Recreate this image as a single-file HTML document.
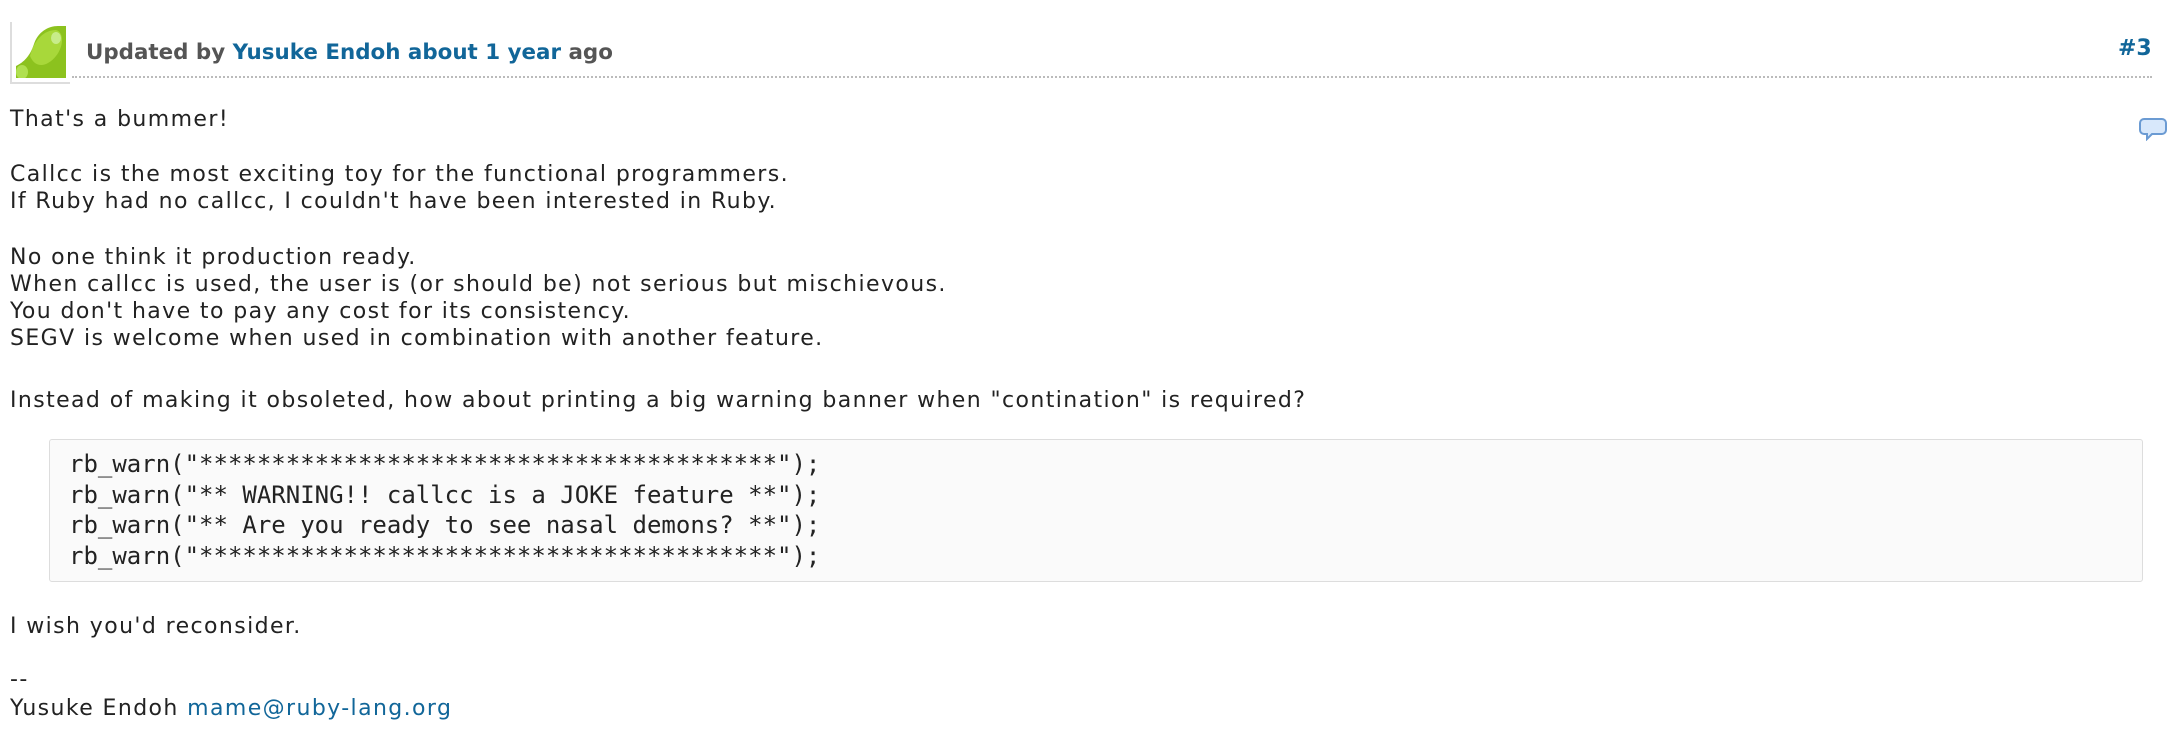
<!DOCTYPE html>
<html><head><meta charset="utf-8"><style>
body{margin:0;background:#fff;width:2178px;height:748px;overflow:hidden;font-family:"DejaVu Sans","Liberation Sans",sans-serif;color:#222;}
.av{position:absolute;left:10px;top:22px;width:58px;height:60px;border:2px solid #ddd;border-right:none;border-top:none;background:#fff}
.av svg{position:absolute;left:4px;top:4px}
.hdr{position:absolute;left:86px;top:40px;font-size:21.4px;font-weight:bold;color:#555;}
a{color:#169;text-decoration:none}
.line{position:absolute;left:72px;top:76px;width:2080px;border-top:2px dotted #bbb}
.num{position:absolute;left:2118px;top:36px;font-size:22px;font-weight:bold;color:#169}
.t{position:absolute;left:10px;font-size:22px;letter-spacing:1.4px;line-height:27px;white-space:nowrap}
pre{position:absolute;left:49px;top:439px;width:2094px;height:143px;margin:0;background:#fafafa;border:1px solid #ddd;border-radius:3px;box-sizing:border-box;padding:9px 0 0 19px;font-family:"DejaVu Sans Mono","Liberation Mono",monospace;font-size:24px;line-height:30.5px;color:#222}
</style></head><body>
<div class="av"><svg width="50" height="52" viewBox="0 0 50 52"><rect width="50" height="52" fill="#fff"/><path d="M0 52V40C8 36 14 30 18 18C22 6 32 0 42 0H50V52Z" fill="#8cc21e"/><path d="M14 30C18 14 28 4 40 4C48 6 48 20 40 30C32 40 20 44 14 30Z" fill="#a8d83a"/><ellipse cx="40" cy="12" rx="5" ry="6" fill="#c8ec8a"/><ellipse cx="6" cy="46" rx="6" ry="7" fill="#b0e050"/></svg></div>
<div class="hdr">Updated by <a>Yusuke Endoh</a> <a>about 1 year</a> ago</div>
<div class="num">#3</div>
<div class="line"></div>
<svg style="position:absolute;left:2139px;top:117px" width="28" height="24" viewBox="0 0 28 24"><path d="M5 2h18a4 4 0 0 1 4 4v7a4 4 0 0 1-4 4H13l-5 5v-5H5a4 4 0 0 1-4-4V6a4 4 0 0 1 4-4z" fill="#d8e8fb" stroke="#6b9bd3" stroke-width="2"/></svg>
<div class="t" style="top:106px">That's a bummer!</div>
<div class="t" style="top:161px">Callcc is the most exciting toy for the functional programmers.<br>If Ruby had no callcc, I couldn't have been interested in Ruby.</div>
<div class="t" style="top:244px">No one think it production ready.<br>When callcc is used, the user is (or should be) not serious but mischievous.<br>You don't have to pay any cost for its consistency.<br>SEGV is welcome when used in combination with another feature.</div>
<div class="t" style="top:387px">Instead of making it obsoleted, how about printing a big warning banner when "contination" is required?</div>
<pre>rb_warn("****************************************");
rb_warn("** WARNING!! callcc is a JOKE feature **");
rb_warn("** Are you ready to see nasal demons? **");
rb_warn("****************************************");</pre>
<div class="t" style="top:613px">I wish you'd reconsider.</div>
<div class="t" style="top:665px;line-height:29px">--<br>Yusuke Endoh <a>mame@ruby-lang.org</a></div>
</body></html>
